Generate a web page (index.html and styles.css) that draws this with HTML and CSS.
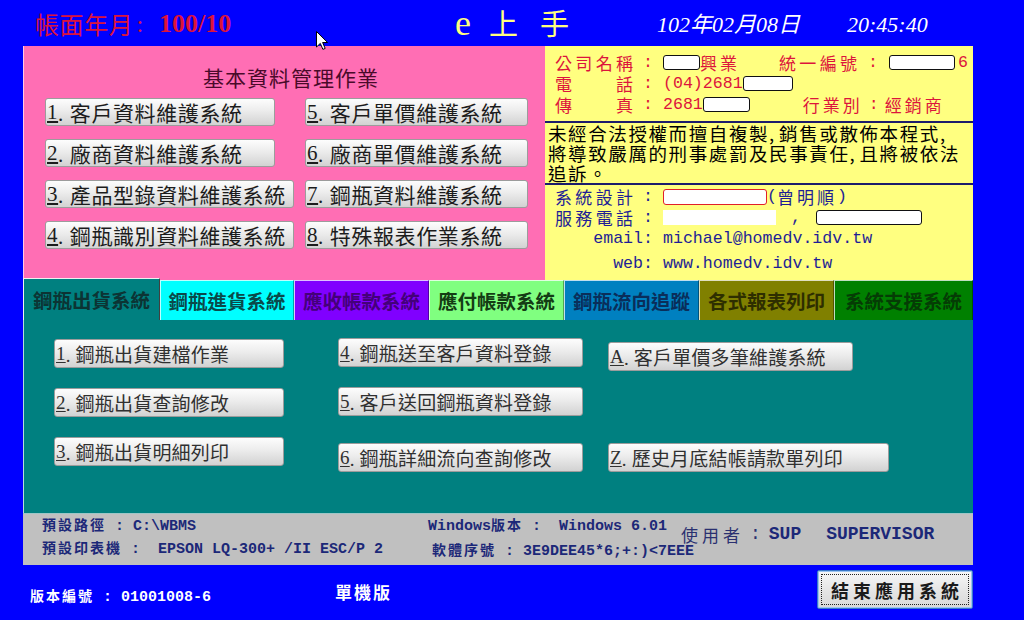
FILE: index.html
```html
<!DOCTYPE html>
<html lang="zh-Hant">
<head>
<meta charset="utf-8">
<title>e上手</title>
<link rel="stylesheet" href="styles.css">
</head>
<body>
<div class="screen">
  <header class="topbar">
    <div class="period"><span class="pk">帳面年月</span><span class="pcolon">:</span><span class="num">100/10</span></div>
    <div class="brand"><span class="e">e</span><span class="c1">上</span><span class="c2">手</span></div>
    <div class="date">102年02月08日</div>
    <div class="time">20:45:40</div>
  </header>

  <main class="frame">
    <section class="upper">
      <div class="basic">
        <h1 class="basic-title">基本資料管理作業</h1>
        <div class="basic-grid">
          <button class="btn pbtn w230"><u>1</u>. 客戶資料維護系統</button>
          <button class="btn pbtn w223"><u>5</u>. 客戶單價維護系統</button>
          <button class="btn pbtn w230"><u>2</u>. 廠商資料維護系統</button>
          <button class="btn pbtn w223"><u>6</u>. 廠商單價維護系統</button>
          <button class="btn pbtn w249"><u>3</u>. 產品型錄資料維護系統</button>
          <button class="btn pbtn w223"><u>7</u>. 鋼瓶資料維護系統</button>
          <button class="btn pbtn w249"><u>4</u>. 鋼瓶識別資料維護系統</button>
          <button class="btn pbtn w223"><u>8</u>. 特殊報表作業系統</button>
        </div>
      </div>

      <div class="info">
        <div class="company">
          <div class="row">
            <span class="lbl">公司名稱</span><span class="colon">:</span><span class="box w37"></span><span class="sp">興業</span>
            <span class="lbl ml39">統一編號</span><span class="colon c32">:</span><span class="box w66"></span><span class="ml3">6</span>
          </div>
          <div class="row">
            <span class="lbl">電話</span><span class="colon">:</span><span>(04)2681</span><span class="box w50"></span>
          </div>
          <div class="row">
            <span class="lbl">傳真</span><span class="colon">:</span><span>2681</span><span class="box w47"></span>
            <span class="sp ml53">行業別</span><span class="colon c20">:</span><span class="sp">經銷商</span>
          </div>
        </div>

        <div class="notice">
          <div class="nline">未經合法授權而擅自複製<span class="cm">,</span>銷售或散佈本程式<span class="cm">,</span></div>
          <div class="nline">將導致嚴厲的刑事處罰及民事責任<span class="cm">,</span>且將被依法</div>
          <div class="nline">追訴。</div>
        </div>

        <div class="contact">
          <div class="row">
            <span class="lbl">系統設計</span><span class="colon">:</span><span class="box redbox w104"></span><span>(</span><span class="sp">曾明順</span><span>)</span>
          </div>
          <div class="row">
            <span class="lbl">服務電話</span><span class="colon">:</span><span class="box plain w113"></span><span class="ml15">,</span><span class="box w106 ml15"></span>
          </div>
          <div class="row">
            <span class="rlbl">email:</span><span>michael@homedv.idv.tw</span>
          </div>
          <div class="row web">
            <span class="rlbl">web:</span><span>www.homedv.idv.tw</span>
          </div>
        </div>
      </div>
    </section>

    <nav class="tabs">
      <div class="tab active">鋼瓶出貨系統</div>
      <div class="tab t-cyan">鋼瓶進貨系統</div>
      <div class="tab t-purple">應收帳款系統</div>
      <div class="tab t-lgreen">應付帳款系統</div>
      <div class="tab t-blue">鋼瓶流向追蹤</div>
      <div class="tab t-olive">各式報表列印</div>
      <div class="tab t-green">系統支援系統</div>
    </nav>

    <section class="panel">
      <button class="btn tbtn w230 m1"><u>1</u>. 鋼瓶出貨建檔作業</button>
      <button class="btn tbtn w245"><u>4</u>. 鋼瓶送至客戶資料登錄</button>
      <button class="btn tbtn w245 m4"><u>A</u>. 客戶單價多筆維護系統</button>
      <button class="btn tbtn w230 m1"><u>2</u>. 鋼瓶出貨查詢修改</button>
      <button class="btn tbtn w245"><u>5</u>. 客戶送回鋼瓶資料登錄</button>
      <div class="slot"></div>
      <button class="btn tbtn w230 m1"><u>3</u>. 鋼瓶出貨明細列印</button>
      <button class="btn tbtn w245 m7"><u>6</u>. 鋼瓶詳細流向查詢修改</button>
      <button class="btn tbtn w281 m7"><u>Z</u>. 歷史月底結帳請款單列印</button>
    </section>

    <section class="status">
      <div class="scol">
        <div class="sline"><span class="k">預設路徑</span> : C:\WBMS</div>
        <div class="sline"><span class="k">預設印表機</span> :  EPSON LQ-300+ /II ESC/P 2</div>
      </div>
      <div class="scol">
        <div class="sline">Windows<span class="k">版本</span> :  Windows 6.01</div>
        <div class="sline l2"><span class="k">軟體序號</span> : 3E9DEE45*6;+:)&lt;7EEE</div>
      </div>
      <div class="scol user">
        <span class="ulbl">使用者</span><span class="ucol">:</span><span class="uval">SUP</span><span class="uval ml25">SUPERVISOR</span>
      </div>
    </section>

    <footer class="foot">
      <div class="ver"><span class="k">版本編號</span> : 01001008-6</div>
      <div class="mode">單機版</div>
      <button class="exit">結束應用系統</button>
    </footer>
  </main>

  <svg class="cursor" width="13" height="20" viewBox="0 0 13 20" aria-hidden="true">
    <path d="M0.5 0.5 L0.5 16 L4.3 12.4 L6.9 18.4 L9.2 17.4 L6.6 11.5 L11.6 11.5 Z" fill="#fff" stroke="#000" stroke-width="1" stroke-linejoin="round"/>
  </svg>
</div>
</body>
</html>
```

FILE: styles.css
```css
* { box-sizing: border-box; margin: 0; padding: 0; }
html, body { width: 1024px; height: 620px; overflow: hidden; }
body {
  background: #0000ff;
  font-family: "Liberation Serif", "Noto Sans CJK TC", serif;
}
.screen { position: relative; width: 1024px; height: 620px; }

/* ---------- top bar ---------- */
.topbar {
  display: grid;
  grid-template-columns: 420px 202px 190px auto;
  height: 46px;
  padding-left: 35px;
  align-items: center;
  line-height: 1;
}
.period {
  color: #dc143c;
  padding-top: 2px;
  white-space: nowrap;
  display: flex;
  align-items: center;
}
.pk {
  font-family: "Noto Sans CJK TC", sans-serif;
  font-size: 24px;
  letter-spacing: 0.6px;
}
.pcolon { font-size: 24px; margin: 0 16px 0 3px; }
.num { font-size: 26px; font-weight: bold; }
.brand {
  color: #ffff80;
  white-space: nowrap;
  display: flex;
  align-items: baseline;
}
.brand .e { font-size: 36px; }
.brand .c1 { font-size: 29px; margin-left: 18px; }
.brand .c2 { font-size: 29px; margin-left: 22px; }
.date, .time {
  color: #ffffff;
  font-style: italic;
  font-size: 22px;
  padding-top: 4px;
  white-space: nowrap;
}

/* ---------- frame ---------- */
.frame { margin-left: 23px; width: 950px; }
.upper { display: flex; height: 234px; }

.basic {
  width: 522px;
  background: #ff6eb4;
  border-left: 1px solid #ffc8e4;
  padding-left: 21px;
}
.basic-title {
  font-family: "Noto Sans CJK TC", sans-serif;
  font-weight: normal;
  font-size: 21px;
  letter-spacing: 1px;
  color: #4a0a2a;
  text-align: center;
  line-height: 22px;
  padding-top: 20px;
  padding-right: 8px;
  height: 52px;
}
.basic-grid {
  display: grid;
  grid-template-columns: 260px 223px;
  grid-auto-rows: 28px;
  row-gap: 13px;
}

.btn {
  display: flex;
  align-items: center;
  font: inherit;
  background: linear-gradient(#fdfdfd, #ececec 45%, #d2d2d2);
  border: 1px solid #9c9c9c;
  border-radius: 3px;
  color: #1c1c1c;
  padding: 0 0 0 1px;
  text-align: left;
  white-space: nowrap;
  overflow: hidden;
}
.btn u { text-underline-offset: 2px; }
.pbtn { font-size: 21px; letter-spacing: 0.6px; height: 28px; }
.w223 { width: 223px; }
.w230 { width: 230px; }
.w245 { width: 245px; }
.w249 { width: 249px; }
.w281 { width: 281px; }

/* ---------- info (yellow) ---------- */
.info {
  width: 428px;
  background: #ffff80;
  font-family: "Liberation Mono", "Noto Sans CJK TC", monospace;
  font-size: 16.6px;
}
.row {
  display: flex;
  align-items: center;
  height: 21px;
  white-space: nowrap;
}
.company { height: 75px; padding: 6px 0 0 10px; color: #dc143c; }
.lbl {
  display: inline-block;
  width: 78px;
  font-size: 17px;
  text-align: justify;
  text-align-last: justify;
}
.colon { display: inline-block; width: 30px; text-align: center; }
.c32 { width: 32px; }
.c20 { width: 22px; }
.sp { font-size: 17px; letter-spacing: 3px; }
.box {
  display: inline-block;
  height: 15px;
  background: #ffffff;
  border: 1px solid #111;
  border-radius: 3px;
}
.box.plain { border-color: #ffffff; border-radius: 0; }
.box.redbox { border: 1.5px solid #e0202a; height: 16px; }
.w37 { width: 37px; }
.w47 { width: 47px; }
.w50 { width: 50px; }
.w66 { width: 66px; }
.w104 { width: 104px; }
.w106 { width: 106px; }
.w113 { width: 113px; }
.ml3 { margin-left: 3px; }
.ml15 { margin-left: 15px; }
.ml25 { margin-left: 25px; }
.ml39 { margin-left: 39px; }
.ml53 { margin-left: 53px; }

.notice {
  border-top: 2px solid #1c1c6c;
  height: 62px;
  padding-left: 3px;
  font-family: "Noto Sans CJK TC", sans-serif;
  font-size: 18.5px;
  letter-spacing: 1.6px;
  color: #000;
  white-space: nowrap;
}
.nline { height: 20px; line-height: 20px; }
.cm { display: inline-block; width: 10px; letter-spacing: 0; }

.contact {
  border-top: 2px solid #1c1c6c;
  padding: 1px 0 0 10px;
  color: #1e1e96;
}
.rlbl { display: inline-block; width: 98px; text-align: right; margin-right: 10px; }
.row.web { margin-top: 4px; }

/* ---------- tabs ---------- */
.tabs {
  display: flex;
  height: 42px;
  margin-top: -2px;
}
.tab {
  height: 40px;
  margin-top: 2px;
  width: 135px;
  display: flex;
  align-items: center;
  justify-content: center;
  font-family: "Noto Sans CJK TC", sans-serif;
  font-weight: 700;
  font-size: 19.5px;
  border-top: 1px solid rgba(255,255,255,0.75);
  border-left: 1px solid rgba(255,255,255,0.75);
  border-right: 1px solid rgba(0,0,0,0.35);
  white-space: nowrap;
}
.tab.active {
  width: 137px;
  height: 42px;
  margin-top: 0;
  background: #008080;
  color: #0c3434;
  border-top: 1px solid #f0f0f0;
  border-left: 1px solid #f0f0f0;
  border-right: 1px solid #404040;
}
.t-cyan { width: 134px; background: #00ffff; color: #0a4a4a; }
.t-purple { background: #8000ff; color: #44007a; }
.t-lgreen { background: #80ff80; color: #143c14; }
.t-blue { background: #0080c0; color: #0a2e5a; }
.t-olive { background: #808000; color: #2e2e00; }
.t-green { width: 139px; background: #008000; color: #053c05; }

/* ---------- teal panel ---------- */
.panel {
  height: 193px;
  background: #008080;
  border-left: 1px solid #b8dada;
  padding: 18px 0 0 30px;
  display: grid;
  grid-template-columns: 284px 270px auto;
  grid-template-rows: 49px 49px 49px;
  align-items: start;
}
.tbtn { height: 29px; font-size: 19px; color: #303030; letter-spacing: 0.2px; }
.m1 { margin-top: 1px; }
.m4 { margin-top: 4px; }
.m7 { margin-top: 7px; }

/* ---------- status bar ---------- */
.status {
  height: 52px;
  background: #c0c0c0;
  border-top: 1px solid #9ec6c6;
  display: grid;
  grid-template-columns: 386px 253px auto;
  padding: 2px 0 0 19px;
  font-family: "Liberation Mono", "Noto Sans CJK TC", monospace;
  font-weight: bold;
  font-size: 15px;
  color: #1c2878;
}
.sline { height: 20px; line-height: 20px; white-space: pre; }
.sline + .sline { margin-top: 3px; }
.sline.l2 { padding-left: 4px; margin-top: 5px; }
.k { font-size: 14px; letter-spacing: 2px; }
.user {
  display: flex;
  align-items: center;
  height: 36px;
  white-space: nowrap;
}
.ulbl { font-weight: normal; font-size: 17px; letter-spacing: 4px; color: #2a3070; }
.ucol { font-weight: normal; margin: 0 8px 0 6px; font-size: 18px; color: #2a3070; }
.uval { font-size: 18px; color: #1c2878; }

/* ---------- footer ---------- */
.foot {
  display: flex;
  align-items: flex-start;
  height: 55px;
  padding-left: 7px;
  color: #ffffff;
  font-family: "Liberation Mono", "Noto Sans CJK TC", monospace;
  font-weight: bold;
}
.ver { width: 305px; margin-top: 22px; font-size: 15px; line-height: 20px; white-space: pre; }
.mode { margin-top: 20px; font-size: 17px; line-height: 20px; letter-spacing: 2px; }
.exit {
  margin-left: auto;
  margin-top: 5px;
  width: 156px;
  height: 39px;
  font-family: "Noto Sans CJK TC", sans-serif;
  font-weight: bold;
  font-size: 18px;
  letter-spacing: 4px;
  padding-left: 4px;
  color: #1a1a1a;
  background: linear-gradient(#f8f8f8, #e6e6e6 50%, #d8d8d8);
  border: 1px solid #3a78c8;
  border-radius: 2px;
  box-shadow: inset 0 0 0 1px #9cc4f0;
  outline: 1px dotted #222;
  outline-offset: -5px;
}

/* mouse pointer captured in the screenshot */
.cursor { position: absolute; left: 316px; top: 31px; }
```
